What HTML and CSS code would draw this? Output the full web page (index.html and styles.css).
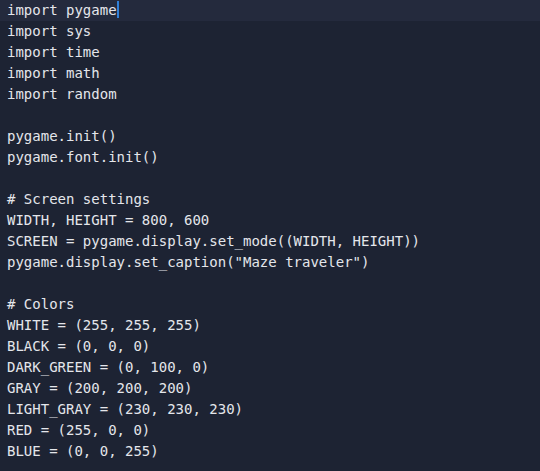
FILE: index.html
```html
<!DOCTYPE html>
<html>
<head>
<meta charset="utf-8">
<link rel="stylesheet" href="styles.css">
</head>
<body>
<div class="editor">
<div class="line current">import pygame<span class="cursor"></span></div>
<div class="line">import sys</div>
<div class="line">import time</div>
<div class="line">import math</div>
<div class="line">import random</div>
<div class="line"> </div>
<div class="line">pygame.init()</div>
<div class="line">pygame.font.init()</div>
<div class="line"> </div>
<div class="line"># Screen settings</div>
<div class="line">WIDTH, HEIGHT = 800, 600</div>
<div class="line">SCREEN = pygame.display.set_mode((WIDTH, HEIGHT))</div>
<div class="line">pygame.display.set_caption("Maze traveler")</div>
<div class="line"> </div>
<div class="line"># Colors</div>
<div class="line">WHITE = (255, 255, 255)</div>
<div class="line">BLACK = (0, 0, 0)</div>
<div class="line">DARK_GREEN = (0, 100, 0)</div>
<div class="line">GRAY = (200, 200, 200)</div>
<div class="line">LIGHT_GRAY = (230, 230, 230)</div>
<div class="line">RED = (255, 0, 0)</div>
<div class="line">BLUE = (0, 0, 255)</div>
</div>
</body>
</html>
```
FILE: styles.css
```css
html, body {
  margin: 0;
  padding: 0;
  background: #1d2333;
  height: 100%;
  overflow: hidden;
}
.editor {
  font-family: "DejaVu Sans Mono", monospace;
  font-size: 14px;
  color: #e4e6eb;
  padding-top: 0;
}
.line {
  height: 21px;
  line-height: 21px;
  padding-left: 7px;
  white-space: pre;
}
.current {
  background: #242a3d;
}
.cursor {
  display: inline-block;
  width: 2px;
  height: 17px;
  background: #2f7fd8;
  vertical-align: -3px;
}
```
